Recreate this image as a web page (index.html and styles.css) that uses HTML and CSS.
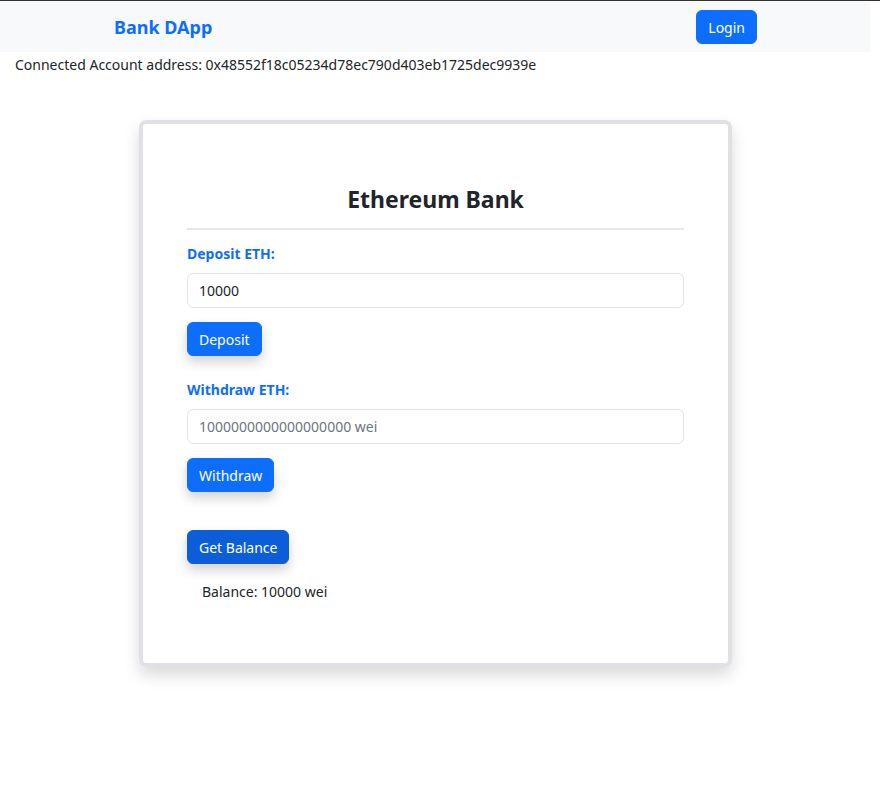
FILE: index.html
```html
<!DOCTYPE html>
<html>
<head>
<meta charset="utf-8">
<link rel="stylesheet" href="styles.css">
</head>
<body>
<nav class="navbar">
  <span class="brand">Bank DApp</span>
  <button class="btn login">Login</button>
</nav>
<p class="account">Connected Account address: 0x48552f18c05234d78ec790d403eb1725dec9939e</p>
<main class="card">
  <h1 class="title">Ethereum Bank</h1>
  <label class="label">Deposit ETH:</label>
  <input class="field" type="text" value="10000">
  <button class="btn action">Deposit</button>
  <label class="label second">Withdraw ETH:</label>
  <input class="field" type="text" placeholder="1000000000000000000 wei">
  <button class="btn action">Withdraw</button>
  <button class="btn action dark">Get Balance</button>
  <p class="balance">Balance: 10000 wei</p>
</main>
</body>
</html>
```
FILE: styles.css
```css
* { box-sizing: border-box; }
html, body { margin: 0; padding: 0; }
body {
  font-family: "Segoe UI", "Noto Sans", sans-serif;
  font-size: 14px;
  color: #212529;
  background: #fff;
  border-top: 1px solid #333;
  width: 880px;
  min-height: 786px;
}
.navbar {
  width: 870px;
  height: 51px;
  background: #f8f9fa;
  display: flex;
  align-items: center;
  justify-content: space-between;
  padding: 0 113px 0 114px;
}
.brand {
  color: #0d6efd;
  font-weight: 700;
  font-size: 18px;
}
.btn {
  font-family: inherit;
  font-size: 14px;
  color: #fff;
  background: #0d6efd;
  border: 1px solid #0d6efd;
  border-radius: 6px;
  height: 34px;
  padding: 0 11px;
  cursor: pointer;
}
.login { margin-top: 1px; }
.account {
  margin: 2px 0 0 15px;
  line-height: 22px;
}
.card {
  width: 593px;
  margin: 44px 0 0 139px;
  border: 4px solid #dfe1e6;
  border-radius: 7px;
  box-shadow: 0 8px 16px rgba(0,0,0,0.15);
  padding: 59px 44px 60px;
  display: flex;
  flex-direction: column;
  align-items: flex-start;
}
.title {
  align-self: stretch;
  text-align: center;
  font-size: 23px;
  font-weight: 700;
  margin: 0;
  padding-bottom: 13px;
  border-bottom: 2px solid #e6e7e9;
  line-height: 32px;
}
.label {
  color: #0d6efd;
  font-weight: 700;
  font-size: 14px;
  margin-top: 13px;
  line-height: 22px;
}
.label.second { margin-top: 23px; }
.field {
  align-self: stretch;
  margin-top: 8px;
  height: 35px;
  border: 1px solid #e2e4e7;
  border-radius: 6px;
  padding: 0 11px;
  font-family: inherit;
  font-size: 14px;
  color: #212529;
}
.field::placeholder { color: #6c757d; }
.action {
  margin-top: 14px;
  box-shadow: 0 6px 12px rgba(0,0,0,0.18);
}
.dark {
  margin-top: 38px;
  background: #0b5ed7;
  border-color: #0b5ed7;
}
.balance {
  margin: 17px 0 0 15px;
  line-height: 22px;
}
```
